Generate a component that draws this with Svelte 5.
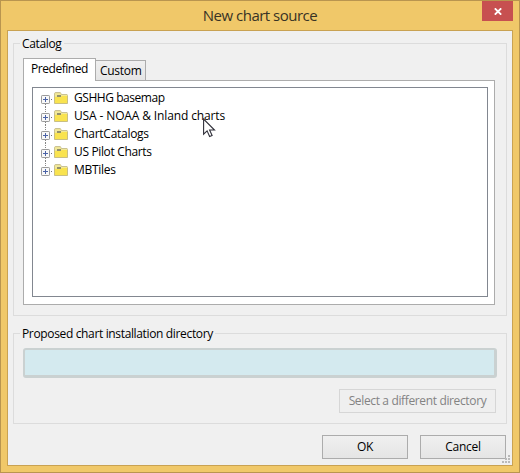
<script>
  const items = [
    { text: 'GSHHG basemap', ls: -0.45 },
    { text: 'USA - NOAA & Inland charts', ls: -0.13 },
    { text: 'ChartCatalogs', ls: -0.28 },
    { text: 'US Pilot Charts', ls: -0.35 },
    { text: 'MBTiles', ls: -0.3 }
  ];
</script>

<div class="window">
  <header>
    <h1>New chart source</h1>
    <button class="close" aria-label="Close">
      <svg width="8" height="7" viewBox="0 0 8 7"><path d="M.8 .3L7.2 6.7M7.2 .3L.8 6.7" stroke="#fff" stroke-width="1.8" /></svg>
    </button>
  </header>
  <main>
    <section class="group catalog">
      <span class="legend">Catalog</span>
      <div class="tabs">
        <div class="tab active">Predefined</div>
        <div class="tab custom">Custom</div>
      </div>
      <div class="pane">
        <div class="tree">
          {#each items as item, i}
            <div class="row">
              <svg width="30" height="18" viewBox="0 0 30 18">
                <path d={i === 0 ? 'M4.5 15v3' : i === items.length - 1 ? 'M4.5 0v6' : 'M4.5 0v6M4.5 15v3'} stroke="#858585" stroke-dasharray="1 1" />
                <path d="M10 10.5h1" stroke="#777" />
                <rect x=".5" y="6.5" width="8" height="8" rx=".7" fill="#f8f8f8" stroke="#9a9a9a" />
                <path d="M2 10.5h5M4.5 8v5" stroke="#4b63a7" />
                <path d="M13.5 14.5V5q0-1 .7-1.5h5q.8 .3 1 2h5.8q.5 .2 .5 1v8z" fill="#e9dc91" stroke="#cac292" />
                <path d="M14 4.5h5.5l.5 1.5h6v1.5H14z" fill="#f2e999" />
                <path d="M14 8h5.5l1.5-1h5.5v7H14z" fill="#f9e34f" />
                <path d="M13.5 7.5v6.5l.5 .5h12l.5-.5V7" fill="none" stroke="#c9bf83" />
                <rect x="16" y="6" width="4" height="2" fill="#918f6c" />
              </svg>
              <span style:letter-spacing="{item.ls}px">{item.text}</span>
            </div>
          {/each}
        </div>
      </div>
    </section>
    <section class="group directory">
      <span class="legend">Proposed chart installation directory</span>
      <div class="field"></div>
      <button class="btn select" disabled>Select a different directory</button>
    </section>
    <footer>
      <button class="btn ok">OK</button>
      <button class="btn cancel">Cancel</button>
    </footer>
    <svg class="grip" width="8" height="8" viewBox="0 0 8 8" fill="#b9b9b9">
      <path d="M6 0h2v2H6zM3 3h2v2H3zM6 3h2v2H6zM0 6h2v2H0zM3 6h2v2H3zM6 6h2v2H6z" />
    </svg>
  </main>
  <svg class="cursor" width="13" height="20" viewBox="0 0 13 20">
    <path d="M.6 1v15.2l3.5-3.3 2.5 5.6 2.5-1.1-2.5-5.4h4.9z" fill="#fff" stroke="#30303a" stroke-width="1.1" />
  </svg>
</div>

<style>
  .window {
    position: relative;
    box-sizing: border-box;
    width: 520px;
    height: 473px;
    border: 1px solid #b9954f;
    background: #f0c869;
    font: 12px/18px 'Open Sans', 'Noto Sans', sans-serif;
    letter-spacing: -0.3px;
    color: #000;
    overflow: hidden;
  }
  header {
    display: flex;
    height: 29px;
  }
  h1 {
    flex: 1;
    margin: 0 -1px 0 36px;
    text-align: center;
    font-size: 15px;
    font-weight: 400;
    line-height: 29px;
    letter-spacing: -0.5px;
    color: #383325;
  }
  .close {
    display: flex;
    align-items: center;
    justify-content: center;
    width: 31px;
    height: 20px;
    margin-right: 6px;
    padding: 1px 0 0;
    border: 0;
    background: #c75050;
  }
  main {
    position: relative;
    box-sizing: border-box;
    width: 506px;
    height: 436px;
    margin-left: 6px;
    padding: 12px 5px 0;
    border: 1px solid #c9a252;
    background: #f0f0f0;
  }
  .group {
    position: relative;
    box-sizing: border-box;
    width: 494px;
    border: 1px solid #dcdcdc;
  }
  .catalog { height: 273px; padding: 14px 0 0 9px; }
  .directory { height: 91px; margin-top: 17px; padding: 14px 9px 0; }
  .legend {
    position: absolute;
    top: -9px;
    left: 6px;
    padding: 0 2px;
    height: 14px;
    letter-spacing: -0.35px;
    background: #f0f0f0;
    white-space: nowrap;
  }
  .tabs { display: flex; align-items: flex-end; height: 22px; }
  .tab {
    box-sizing: border-box;
    border: 1px solid #acacac;
    border-bottom: 0;
    white-space: nowrap;
  }
  .active {
    position: relative;
    z-index: 1;
    width: 73px;
    height: 23px;
    margin-bottom: -1px;
    padding: 1px 0 0 7px;
    letter-spacing: -0.45px;
    background: #fff;
  }
  .custom {
    width: 50px;
    height: 20px;
    border-left: 0;
    padding: 1px 0 0 4px;
    background: linear-gradient(#f0f0f0, #e5e5e5);
  }
  .pane {
    box-sizing: border-box;
    width: 472px;
    height: 225px;
    padding: 6px 0 0 8px;
    border: 1px solid #acacac;
    background: #fff;
  }
  .tree {
    box-sizing: border-box;
    width: 456px;
    height: 210px;
    padding: 1px 0 0 8px;
    border: 1px solid #828790;
    background: #fff;
  }
  .row { display: flex; height: 18px; white-space: nowrap; }
  .row svg { flex: none; margin-right: 3px; }
  .field {
    box-sizing: border-box;
    width: 474px;
    height: 30px;
    border: 2px solid #cad1d1;
    border-right-width: 3px;
    border-bottom-width: 3px;
    border-radius: 3px;
    background: #d4eaef;
  }
  .btn {
    display: block;
    box-sizing: border-box;
    height: 24px;
    padding: 0;
    border: 1px solid #acacac;
    background: linear-gradient(#f0f0f0, #e5e5e5);
    font: inherit;
    letter-spacing: inherit;
    color: #000;
    white-space: nowrap;
  }
  .select {
    width: 157px;
    margin: 11px 0 0 316px;
    border-color: #d6d6d6;
    background: #efefef;
    letter-spacing: -0.36px;
    color: #838383;
  }
  footer {
    display: flex;
    justify-content: flex-end;
    gap: 12px;
    margin: 11px 1px 0 0;
  }
  .ok, .cancel { width: 86px; }
  .grip { position: absolute; right: 2px; bottom: 2px; }
  .cursor { position: absolute; left: 202px; top: 117px; }
</style>
